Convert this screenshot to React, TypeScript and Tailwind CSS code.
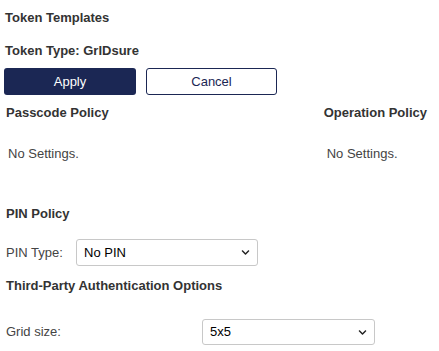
import { FaChevronDown } from "react-icons/fa";

const font = { fontFamily: '"Liberation Sans", Arial, sans-serif' };

function Select({ value, width }: { value: string; width: string }) {
  return (
    <div
      className={`${width} h-full flex items-center justify-between border border-[#c8c8c8] rounded-[3px] bg-white pl-[7px] pr-[7px] text-[13px] text-black`}
    >
      <span>{value}</span>
      <FaChevronDown className="w-[9px] h-[9px] text-[#222]" />
    </div>
  );
}

export default function App() {
  return (
    <div className="w-[439px] h-[351px] bg-white text-[13px] text-[#333] overflow-hidden" style={font}>
      <div className="px-[4px]">
        <div className="mt-[10px] leading-[16px] font-bold pl-[1px]">Token Templates</div>
        <div className="mt-[17px] leading-[16px] font-bold pl-[1px]">Token Type: GrIDsure</div>
        <div className="mt-[9px] flex gap-[10px] h-[27px]">
          <button className="w-[132px] h-full rounded-[3px] bg-[#1b2754] text-white">Apply</button>
          <button className="w-[131px] h-full rounded-[3px] border border-[#1b2754] bg-white text-[#1b2754]">
            Cancel
          </button>
        </div>
      </div>
      <div className="flex justify-between pl-[6px] pr-[12px]">
        <div>
          <div className="mt-[10px] leading-[16px] font-bold">Passcode Policy</div>
          <div className="mt-[25px] leading-[16px] pl-[2px] text-[#444]">No Settings.</div>
        </div>
        <div>
          <div className="mt-[10px] leading-[16px] font-bold">Operation Policy</div>
          <div className="mt-[25px] leading-[16px] pl-[3px] text-[#444]">No Settings.</div>
        </div>
      </div>
      <div className="pl-[6px]">
        <div className="mt-[44px] leading-[16px] font-bold">PIN Policy</div>
        <div className="mt-[17px] h-[27px] flex items-center">
          <span className="w-[70px] text-[#444]">PIN Type:</span>
          <Select value="No PIN" width="w-[182px]" />
        </div>
        <div className="mt-[12px] leading-[16px] font-bold">Third-Party Authentication Options</div>
        <div className="mt-[25px] h-[26px] flex items-center">
          <span className="w-[196px] text-[#444]">Grid size:</span>
          <Select value="5x5" width="w-[173px]" />
        </div>
      </div>
    </div>
  );
}
